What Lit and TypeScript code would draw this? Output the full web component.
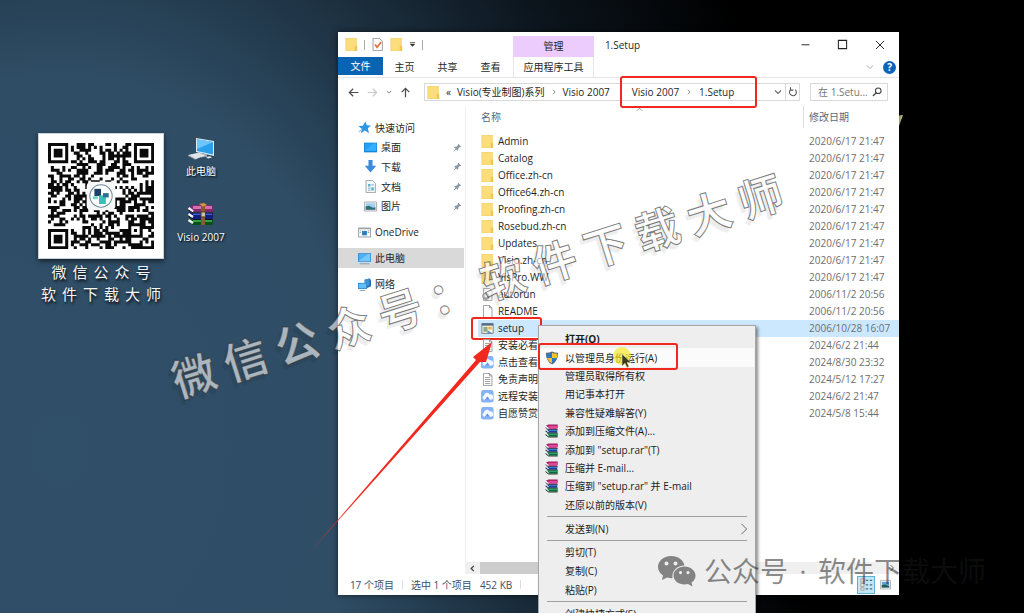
import { LitElement, html, css, svg, nothing, TemplateResult } from "lit";
import { customElement, property } from "lit/decorators.js";
import { classMap } from "lit/directives/class-map.js";

const QR_SIZE = 37;

/** Builds the path of a QR-like symbol: finders, timing rows, one alignment mark and a data field. */
function qrPath(): string {
  let seed = 20070617;
  const rand = () => {
    seed = (seed * 1103515245 + 12345) & 0x7fffffff;
    return (seed >> 8) / 0x7fffff;
  };
  const finders = [[0, 0], [QR_SIZE - 7, 0], [0, QR_SIZE - 7]];
  let d = "";
  for (let y = 0; y < QR_SIZE; y++) {
    for (let x = 0; x < QR_SIZE; x++) {
      let on = rand() > 0.46;
      for (const [fx, fy] of finders) {
        const ring = Math.max(Math.abs(x - fx - 3), Math.abs(y - fy - 3));
        if (ring <= 4) on = ring === 3 || ring <= 1;
      }
      const mark = Math.max(Math.abs(x - 30), Math.abs(y - 30));
      if (mark <= 2) on = mark !== 1;
      if (on) d += `M${x} ${y}h1.06v1.06h-1.06z`;
    }
  }
  return d;
}

const rarBooks = svg`
  <path d="M1 2l3-1.500h10.500v4l-2 .8H4z" fill="#a3195b"/><path d="M4 2h10l.5 3H4z" fill="#e0499b"/>
  <path d="M1 6l3 .4h10v3.600H4L1 9z" fill="#1b3f9c"/><path d="M4.500 6.500H14v1.300H4.500z" fill="#3f8be0"/>
  <path d="M1 10.500h13.500v4H4l-3-1.500z" fill="#0c6b3c"/><path d="M4.500 11H14v1.300H4.500z" fill="#31b56c"/>
  <path d="M.8 2.500L4 5.200M.8 6.300L4 9M.8 10.300L4 13.500" stroke="#fff" stroke-width="1.300"/>
  <path d="M.5 4L4 6.500M.5 8L4 10.300M.5 12L4 15h10.500M4 6.200h10.500M4 10.300h10.500" stroke="#222" stroke-width=".8" fill="none"/>`;

const docLines = svg`<path d="M3 .5h7.500L13.500 3.500v12H3z" fill="#fff" stroke="#8a8a8a"/><path d="M10.500.5v3h3" fill="none" stroke="#8a8a8a"/>`;

const glyphs: Record<string, TemplateResult> = {
  folder: svg`<path d="M1 0h13v16H1z" fill="#fbdd7c"/><path d="M1 0h13v16H1z" fill="none" stroke="#efcb63" stroke-width=".8"/><path d="M12 9.500h3V16h-3z" fill="#f0c552"/>` as any,
  check: svg`<path d="M2.500.5h8L14 4v11.500H2.500z" fill="#fdfdfd" stroke="#8b8b8b"/><path d="M5 8l2.500 3.500L12.500 5" fill="none" stroke="#e2703a" stroke-width="2"/>` as any,
  autorun: svg`<path d="M3 .5h7.500L13.500 3.500v12H3z" fill="#fff" stroke="#999"/><circle cx="6" cy="10" r="4" fill="#b9bfc6" stroke="#888"/><circle cx="6" cy="10" r="1.300" fill="#fff"/>` as any,
  blank: docLines as any,
  text: svg`${docLines}<path d="M5 5.500h6M5 8h6.500M5 10.500h6.500M5 13h6.500" stroke="#8d8d8d"/>` as any,
  setup: svg`<path d="M1 2h14v12H1z" fill="#f4f1dc" stroke="#6d6d6d"/><path d="M1 1.500h14v3H1z" fill="#56708c"/><path d="M3 6h5v6H3z" fill="#8fa88a"/><path d="M9 6h4v3H9z" fill="#e8b23c"/><path d="M8 10l6 4H8z" fill="#5f8cc2"/>` as any,
  cloud: svg`<rect x="0" y="0" width="15.500" height="15.500" rx="3" fill="#86b2f6"/><path d="M4 12a2.600 2.600 0 0 1-.5-5 4 4 0 0 1 7.500-1.500 3.300 3.300 0 0 1 1.500 6.500z" fill="#f4f9ff"/><path d="M4.500 12l3.500-4 3 4z" fill="#5f95ee"/>` as any,
  star: svg`<path d="M9 .5l2 4.700 5 .3-3.900 3.300L13.500 15 8.500 11.700 3.500 15l1.300-5.300L.5 6.300l5.500-.6z" fill="#2f96e3"/><path d="M1 13.500l4-3" stroke="#8cc5f2" stroke-width="1.500"/>` as any,
  desktop: svg`<path d="M0 2h16v12H0z" fill="#1b86d8"/><path d="M1 3h14v9H1z" fill="#23a2f5"/><path d="M1 12L12 3h3v9z" fill="#35b0ff"/>` as any,
  download: svg`<path d="M5.500 0h5v7H15l-7 8.500L1 7h4.500z" fill="#3a8bdc"/>` as any,
  document: svg`<path d="M2.500.5h8L14 4v11.500H2.500z" fill="#f4f9fc" stroke="#8a949c"/><path d="M5 5h3v3H5zM9 9h3v4H9z" fill="#5fb0cf"/><path d="M9 6h3M5 10h3M5 12.500h3" stroke="#5a9ab5"/>` as any,
  picture: svg`<path d="M.5 2.500h15v11H.5z" fill="#fafafa" stroke="#9a9a9a"/><path d="M2 4h12v8H2z" fill="#9fd0ee"/><path d="M2 8l4-1 5 2.500 3-.5v3H2z" fill="#2c6f77"/>` as any,
  onedrive: svg`<path d="M.5 2.500h15v11H.5z" fill="#fdfdfd" stroke="#808890"/><path d="M1 2.500h14V4H1z" fill="#9aa3ab"/><path d="M5 6h6v5.500H5z" fill="#2b7fc4"/><path d="M12 6h2M12 8h2M2 6h1.500M2 8h1.500" stroke="#888"/>` as any,
  pc: svg`<path d="M0 1.500h16v10.500H0z" fill="#2a8ad6"/><path d="M1 2.500h14v8.500H1z" fill="#4db1f4"/><path d="M1 11L12 2.500h3V11z" fill="#76c8fb"/><path d="M2 14.500h12" stroke="#7f9fb8" stroke-width="1.200"/>` as any,
  network: svg`<path d="M8 2l6-1.500 2 2V10l-6 3z" fill="#2472ad"/><path d="M8 2l6-1.500V9l-6 2z" fill="#3f93d3"/><path d="M0 6h11v7.500H0z" fill="#2a8ad6"/><path d="M1 7h9v5.500H1z" fill="#63bdf8"/><path d="M2 15.300h7" stroke="#6f8ea5"/>` as any,
  pin: svg`<path d="M9.500 1.500l5 5-1.500 1-1-.3-2.800 2.800.2 2.500-1.400 1.400L2.100 8l1.400-1.400L6 6.800 8.800 4l-.3-1z" fill="#8b97a3"/><path d="M5.500 10.500L1.500 14.500" stroke="#8b97a3" stroke-width="1.500"/>` as any,
  shield: svg`<path d="M8 .5q4 2 7 1.500 0 9.500-7 13.500Q1 11.500 1 2q3 .5 7-1.500z" fill="#5b6a78"/><path d="M8 2v6H2.200Q2 5 2 3.200 5 3.500 8 2z" fill="#2a78c8"/><path d="M8 2q3 1.500 6 1.200Q14 5 13.800 8H8z" fill="#f5c02e"/><path d="M2.200 8H8v6.300Q3.500 11.500 2.200 8z" fill="#f5c02e"/><path d="M13.800 8H8v6.300Q12.500 11.500 13.800 8z" fill="#2a78c8"/>` as any,
  rar: rarBooks as any,
  left: svg`<path d="M15 8H2M7.500 2.500L2 8l5.500 5.500" fill="none" stroke="#4d4d4d" stroke-width="1.800"/>` as any,
  right: svg`<path d="M1 8h13M8.500 2.500L14 8l-5.500 5.500" fill="none" stroke="#c9c9c9" stroke-width="1.800"/>` as any,
  up: svg`<path d="M8 15V2M2.500 7.500L8 2l5.500 5.500" fill="none" stroke="#4d4d4d" stroke-width="1.800"/>` as any,
  chevronDown: svg`<path d="M2 5l6 6 6-6" fill="none" stroke="#6a6a6a" stroke-width="2.200"/>` as any,
  chevronPale: svg`<path d="M2 5l6 6 6-6" fill="none" stroke="#a8a8a8" stroke-width="2"/>` as any,
  chevronUp: svg`<path d="M2 11l6-6 6 6" fill="none" stroke="#8a8a8a" stroke-width="2"/>` as any,
  chevronRight: svg`<path d="M5 2l6 6-6 6" fill="none" stroke="#5f5f5f" stroke-width="2"/>` as any,
  chevronLeft: svg`<path d="M11 2L5 8l6 6" fill="none" stroke="#444" stroke-width="3"/>` as any,
  thinRight: svg`<path d="M4.500 1l7 7-7 7" fill="none" stroke="#666" stroke-width="1.300"/>` as any,
  customize: svg`<path d="M2 4h12" stroke="#333" stroke-width="2"/><path d="M2 7h12l-6 6z" fill="#333"/>` as any,
  minimize: svg`<path d="M1 8.500h14" stroke="#222" stroke-width="1.700"/>` as any,
  maximize: svg`<path d="M2 2h12v12H2z" fill="none" stroke="#222" stroke-width="1.500"/>` as any,
  close: svg`<path d="M1.500 1.500l13 13M14.500 1.500l-13 13" stroke="#222" stroke-width="1.500"/>` as any,
  refresh: svg`<path d="M4 4.500a5.500 5.500 0 1 0 7.500-.3M4 .5v4.500h4.500" fill="none" stroke="#555" stroke-width="1.700"/>` as any,
  search: svg`<circle cx="10" cy="6" r="4.500" fill="none" stroke="#444" stroke-width="1.700"/><path d="M6.800 9.200L1.500 14.500" stroke="#444" stroke-width="2"/>` as any,
  details: svg`<path d="M1 1h4v4H1zM1 6.500h4v4H1zM1 12h4v3H1z" fill="#e8e2de" stroke="#a08a80" stroke-width=".8"/><path d="M7 3h3M12 3h3M7 8.500h3M12 8.500h3M7 13.500h3M12 13.500h3" stroke="#56707e" stroke-width="1.500"/>` as any,
  thumbs: svg`<path d="M.7 2h14.600v12.500H.7z" fill="#fff" stroke="#9a9a9a"/><path d="M2.500 4h11v8.500h-11z" fill="#5aa7e0"/><path d="M2.500 9l5-1 6 3v1.500h-11z" fill="#245a4a"/>` as any,
};

@customElement("ui-icon")
export class UiIcon extends LitElement {
  @property() name = "";
  @property({ type: Number }) size = 12;

  static styles = css`
    :host { display: inline-flex; flex: none; }
    .glyph { display: block; }
  `;

  render() {
    return html`<svg class="glyph" width=${this.size} height=${this.size} viewBox="0 0 16 16" aria-hidden="true">${glyphs[this.name]}</svg>`;
  }
}

interface MenuEntry { label: string; icon?: string; bold?: boolean; hot?: boolean; sub?: boolean }

const menuGroups: { kind: string; items: MenuEntry[] }[] = [
  {
    kind: "tall",
    items: [
      { label: "打开(O)", bold: true },
      { label: "以管理员身份运行(A)", icon: "shield", hot: true },
      { label: "管理员取得所有权" },
      { label: "用记事本打开" },
      { label: "兼容性疑难解答(Y)" },
      { label: "添加到压缩文件(A)...", icon: "rar" },
      { label: '添加到 "setup.rar"(T)', icon: "rar" },
      { label: "压缩并 E-mail...", icon: "rar" },
      { label: '压缩到 "setup.rar" 并 E-mail', icon: "rar" },
      { label: "还原以前的版本(V)" },
    ],
  },
  { kind: "single", items: [{ label: "发送到(N)", sub: true }] },
  { kind: "triple", items: [{ label: "剪切(T)" }, { label: "复制(C)" }, { label: "粘贴(P)" }] },
  { kind: "single", items: [{ label: "创建快捷方式(S)" }] },
];

@customElement("context-menu")
export class ContextMenu extends LitElement {
  static styles = css`
    :host {
      display: block; box-sizing: border-box; width: 218px; padding: 4px 0 12px;
      background: #eee; border: 1px solid #a6a6a6; box-shadow: 2px 2px 3px rgba(0, 0, 0, .45);
    }
    .group { display: flex; flex-direction: column; margin: 0; padding: 0 1px; list-style: none; }
    .tall { height: 184px; }
    .triple { height: 56px; }
    .single { height: 19px; }
    .row { position: relative; flex: 1; display: flex; }
    .item {
      flex: 1; display: grid; grid-template-columns: 25px 1fr 16px; align-items: center;
      padding: 0; border: 0; background: none; font: inherit; line-height: 16px; color: #1b1b1b; text-align: left;
    }
    .slot { display: flex; justify-content: center; }
    .bold { font-weight: 700; }
    .hot { background: #fbfbfb; }
    .rule { height: 1px; margin: 2px 8px; border: 0; background: #a0a0a0; }
    .ring {
      position: absolute; left: -2px; top: -5px; width: 136px; height: 23px;
      border: 2px solid #f0281e; border-radius: 3px; pointer-events: none;
    }
    .pointer { position: absolute; left: 72px; top: -2px; pointer-events: none; }
  `;

  private row(e: MenuEntry) {
    return html`<li class="row">
      <button class=${classMap({ item: true, bold: !!e.bold, hot: !!e.hot })} role="menuitem">
        <span class="slot">${e.icon ? html`<ui-icon name=${e.icon} .size=${14}></ui-icon>` : nothing}</span>
        <span>${e.label}</span>
        ${e.sub ? html`<ui-icon name="thinRight" .size=${12}></ui-icon>` : nothing}
      </button>
      ${e.hot
        ? html`<span class="ring"></span>
            <svg class="pointer" width="24" height="26" viewBox="0 0 24 26" aria-hidden="true">
              <circle cx="10" cy="10" r="9" fill="#f6e71d" fill-opacity=".66" />
              <path d="M10 8v12l3-2.700 2 4.200 2-1-2-4h4z" fill="#3a3a20" stroke="#e8e8a0" stroke-width=".5" />
            </svg>`
        : nothing}
    </li>`;
  }

  render() {
    return menuGroups.map(
      (g, i) => html`${i ? html`<hr class="rule" />` : nothing}
        <ul class="group ${g.kind}">${g.items.map((e) => this.row(e))}</ul>`
    );
  }
}

const files: [string, string, string][] = [
  ["folder", "Admin", "2020/6/17 21:47"],
  ["folder", "Catalog", "2020/6/17 21:47"],
  ["folder", "Office.zh-cn", "2020/6/17 21:47"],
  ["folder", "Office64.zh-cn", "2020/6/17 21:47"],
  ["folder", "Proofing.zh-cn", "2020/6/17 21:47"],
  ["folder", "Rosebud.zh-cn", "2020/6/17 21:47"],
  ["folder", "Updates", "2020/6/17 21:47"],
  ["folder", "Visio.zh-cn", "2020/6/17 21:47"],
  ["folder", "VisPro.WW", "2020/6/17 21:47"],
  ["autorun", "autorun", "2006/11/2 20:56"],
  ["blank", "README", "2006/11/2 20:56"],
  ["setup", "setup", "2006/10/28 16:07"],
  ["text", "安装必看", "2024/6/2 21:44"],
  ["cloud", "点击查看", "2024/8/30 23:32"],
  ["text", "免责声明", "2024/5/12 17:27"],
  ["cloud", "远程安装", "2024/6/2 21:47"],
  ["cloud", "自愿赞赏", "2024/5/8 15:44"],
];

const quickLinks = [["desktop", "桌面"], ["download", "下载"], ["document", "文档"], ["picture", "图片"]];

@customElement("explorer-window")
export class ExplorerWindow extends LitElement {
  static styles = css`
    :host {
      display: flex; flex-direction: column; background: #fff; color: #1f1f1f;
      box-shadow: 0 0 6px rgba(0, 0, 0, .6);
    }
    button, input { font: inherit; color: inherit; margin: 0; padding: 0; border: 0; background: none; }
    a { color: inherit; text-decoration: none; }
    .tool { display: flex; align-items: center; justify-content: center; }

    .head { display: grid; grid-template-columns: 175px 81px 1fr; grid-template-rows: 25px 20px; border-bottom: 1px solid #e4e4e4; }
    .quick { display: flex; align-items: center; gap: 6px; padding-left: 7px; }
    .bar { width: 1px; height: 10px; background: #aaa; }
    .manage { margin-top: 4px; background: #ebccfc; line-height: 21px; text-align: center; }
    .caption { display: flex; align-items: center; padding-left: 11px; }
    .controls { display: flex; margin-left: auto; padding-right: 1px; }
    .controls .tool { width: 37px; height: 25px; }
    .tabs { display: flex; }
    .tab { width: 43px; height: 20px; line-height: 20px; text-align: center; }
    .file { width: 45px; height: 18px; line-height: 18px; background: #0a64b4; color: #fff; }
    .apptab { width: auto; border: 1px solid #e6e6e6; border-width: 0 1px; }
    .expand { display: flex; align-items: center; justify-content: flex-end; gap: 9px; padding-right: 3px; }
    .help { width: 13px; height: 13px; border-radius: 50%; background: #0c64b8; color: #fff; font-size: 10px; font-weight: 700; line-height: 13px; }

    .address { display: flex; align-items: center; padding: 4px 11px 4px 10px; height: 20px; gap: 10px; }
    .steps { display: flex; gap: 8px; align-items: center; width: 70px; }
    .path { flex: 1; display: flex; align-items: center; height: 18px; margin-left: -4px; border: 1px solid #d9d9d9; box-sizing: border-box; }
    .crumbs { position: relative; display: flex; align-items: center; gap: 6px; padding-left: 2px; white-space: nowrap; }
    .marked { padding-left: 22px; gap: 7px; }
    .marked::after { content: ""; position: absolute; left: 10px; right: -23px; top: -9px; bottom: -9px; border: 2px solid #f0281e; border-radius: 3px; }
    .ends { margin-left: auto; display: flex; }
    .ends .tool { width: 14px; height: 16px; }
    .reload { border-left: 1px solid #d9d9d9; }
    .search { display: flex; align-items: center; width: 78px; height: 18px; box-sizing: border-box; border: 1px solid #d9d9d9; padding: 0 5px 0 7px; }
    .search input { flex: 1; min-width: 0; width: 0; outline: 0; color: #777; }
    .search input::placeholder { color: #777; opacity: 1; }

    .body { flex: 1; display: grid; grid-template-columns: 128px 1fr; min-height: 0; }
    .nav { display: flex; flex-direction: column; gap: 6px; padding-top: 12px; padding-right: 1px; border-right: 1px solid #f0f0f0; }
    .favs { display: grid; grid-template-rows: repeat(5, 1fr); height: 98px; }
    .place { display: flex; align-items: center; gap: 4px; padding: 0 2px 0 20px; height: 20px; }
    .favs .place { height: auto; }
    .child { padding-left: 26px; }
    .root { padding-left: 20px; }
    .child .pin { margin-left: auto; }
    .here { background: #d9d9d9; }

    .pane { display: flex; flex-direction: column; justify-content: space-between; min-width: 0; }
    .list { margin-left: 12px; }
    .files { width: 100%; border-collapse: collapse; table-layout: fixed; }
    .files th { height: 21px; padding: 0 0 6px 3px; font-weight: 400; text-align: left; color: #58697c; }
    .files .when { width: 90px; padding-left: 5px; }
    .files th.when { position: relative; }
    .files th.when::before { content: ""; position: absolute; left: -1px; top: 0; height: 22px; width: 1px; background: #dedede; }
    .files td { height: 17px; padding: 0 0 0 3px; line-height: 17px; white-space: nowrap; }
    .files td.when { color: #6e6e6e; }
    .entry { position: relative; display: flex; align-items: center; gap: 4px; height: 17px; }
    .sel { background: #cce8ff; }
    .sorted { position: relative; }
    .sort { position: absolute; left: 158px; top: 0; line-height: 0; }
    .ring { position: absolute; left: -10px; top: -3px; width: 67px; height: 19px; border: 2px solid #f0281e; border-radius: 3px; }

    .scroll { display: flex; height: 12px; background: #f0f0f0; }
    .scroll .tool { width: 14px; }
    .thumb { width: 200px; background: #cdcdcd; }
    .gap { flex: 1; }
    .status { display: flex; align-items: center; height: 21px; padding: 0 6px 0 12px; color: #3c5068; gap: 8px; }
    .status .sep { width: 1px; height: 9px; background: #ddd; }
    .views { margin-left: auto; display: flex; align-items: center; gap: 3px; }
    .views .tool { width: 15px; height: 18px; }
    .views .on { width: 18px; border: 1px solid #5fb2d6; background: #c3e6f6; }

    .menu { position: absolute; left: 200px; top: 293px; }
    .arrow { position: absolute; left: -38px; top: 308px; pointer-events: none; }
  `;

  render() {
    return html`
      <header class="head">
        <div class="quick">
          <ui-icon name="folder" .size=${13}></ui-icon><span class="bar"></span>
          <ui-icon name="check" .size=${13}></ui-icon><ui-icon name="folder" .size=${13}></ui-icon>
          <button class="tool" aria-label="自定义"><ui-icon name="customize" .size=${7}></ui-icon></button><span class="bar"></span>
        </div>
        <div class="manage">管理</div>
        <div class="caption">1.Setup
          <div class="controls">
            <button class="tool" aria-label="最小化"><ui-icon name="minimize" .size=${9}></ui-icon></button>
            <button class="tool" aria-label="最大化"><ui-icon name="maximize" .size=${11}></ui-icon></button>
            <button class="tool" aria-label="关闭"><ui-icon name="close" .size=${10}></ui-icon></button>
          </div>
        </div>
        <nav class="tabs">
          <button class="tab file">文件</button><button class="tab">主页</button><button class="tab">共享</button><button class="tab">查看</button>
        </nav>
        <button class="tab apptab">应用程序工具</button>
        <div class="expand">
          <button class="tool" aria-label="展开"><ui-icon name="chevronPale" .size=${8}></ui-icon></button>
          <button class="help" aria-label="帮助">?</button>
        </div>
      </header>

      <div class="address">
        <div class="steps">
          <button class="tool" aria-label="后退"><ui-icon name="left" .size=${11}></ui-icon></button>
          <button class="tool" aria-label="前进"><ui-icon name="right" .size=${11}></ui-icon></button>
          <button class="tool" aria-label="历史"><ui-icon name="chevronDown" .size=${6}></ui-icon></button>
          <button class="tool" aria-label="上移"><ui-icon name="up" .size=${11}></ui-icon></button>
        </div>
        <div class="path">
          <div class="crumbs">
            <ui-icon name="folder" .size=${13}></ui-icon><span>«</span>
            <button>Visio(专业制图)系列</button><ui-icon name="chevronRight" .size=${6}></ui-icon>
            <button>Visio 2007</button>
          </div>
          <div class="crumbs marked">
            <button>Visio 2007</button><ui-icon name="chevronRight" .size=${6}></ui-icon><button>1.Setup</button>
          </div>
          <div class="ends">
            <button class="tool" aria-label="以前的位置"><ui-icon name="chevronDown" .size=${8}></ui-icon></button>
            <button class="tool reload" aria-label="刷新"><ui-icon name="refresh" .size=${10}></ui-icon></button>
          </div>
        </div>
        <label class="search"><input type="text" aria-label="搜索" placeholder="在 1.Setu..." /><ui-icon name="search" .size=${10}></ui-icon></label>
      </div>

      <div class="body">
        <nav class="nav">
          <div class="favs">
            <a class="place" href="#quick"><ui-icon name="star" .size=${13}></ui-icon>快速访问</a>
            ${quickLinks.map(([icon, label]) => html`
              <a class="place child" href="#${icon}"><ui-icon name=${icon} .size=${13}></ui-icon>${label}<ui-icon class="pin" name="pin" .size=${9}></ui-icon></a>`)}
          </div>
          <a class="place root" href="#onedrive"><ui-icon name="onedrive" .size=${13}></ui-icon>OneDrive</a>
          <a class="place root here" href="#pc"><ui-icon name="pc" .size=${13}></ui-icon>此电脑</a>
          <a class="place root" href="#network"><ui-icon name="network" .size=${13}></ui-icon>网络</a>
        </nav>
        <div class="pane">
          <div class="list">
            <table class="files">
              <thead><tr>
                <th class="sorted">名称<span class="sort"><ui-icon name="chevronUp" .size=${7}></ui-icon></span></th>
                <th class="when">修改日期</th>
              </tr></thead>
              <tbody>
                ${files.map(([icon, name, date]) => html`
                  <tr class=${classMap({ sel: name === "setup" })}>
                    <td><div class="entry"><ui-icon name=${icon} .size=${13}></ui-icon>${name}${name === "setup" ? html`<span class="ring"></span>` : nothing}</div></td>
                    <td class="when">${date}</td>
                  </tr>`)}
              </tbody>
            </table>
          </div>
          <div class="scroll">
            <button class="tool" aria-label="向左滚动"><ui-icon name="chevronLeft" .size=${7}></ui-icon></button>
            <div class="thumb"></div><div class="gap"></div>
            <button class="tool" aria-label="向右滚动"><ui-icon name="chevronRight" .size=${8}></ui-icon></button>
          </div>
        </div>
      </div>

      <footer class="status">
        <span>17 个项目</span><span class="sep"></span><span>选中 1 个项目</span><span>452 KB</span><span class="sep"></span>
        <div class="views">
          <button class="tool on" aria-label="详细信息"><ui-icon name="details" .size=${13}></ui-icon></button>
          <button class="tool" aria-label="大图标"><ui-icon name="thumbs" .size=${11}></ui-icon></button>
        </div>
      </footer>

      <context-menu class="menu" role="menu"></context-menu>
      <svg class="arrow" width="200" height="224" viewBox="0 0 200 224" aria-hidden="true">
        <defs>
          <linearGradient id="fade" x1="0" y1="1" x2="1" y2="0">
            <stop offset="0" stop-color="#f0281e" stop-opacity=".2" /><stop offset=".25" stop-color="#f0281e" />
          </linearGradient>
        </defs>
        <path d="M3 220L176 20l-3-3 19-15-6 20-6 0z" fill="url(#fade)" />
      </svg>
    `;
  }
}

@customElement("app-root")
export class AppRoot extends LitElement {
  static styles = css`
    :host {
      position: relative; display: block; height: 100vh; min-height: 560px; overflow: hidden;
      background: radial-gradient(ellipse 760px 940px at 60px 450px, #304f68 0, #2f4d65 40%, #253e52 50%, #0c151d 78%, #000 100%) #000;
      font: 10px/14px "Open Sans", "Noto Sans", "Noto Sans CJK SC", sans-serif;
    }
    .contact { position: absolute; left: 38px; top: 133px; width: 126px; }
    .qr { display: block; box-sizing: border-box; width: 126px; height: 126px; padding: 9px; background: #fff; border: 1px solid #c7d2da; box-shadow: 0 2px 5px rgba(0, 0, 0, .6); }
    .words { display: flex; flex-direction: column; align-items: center; gap: 2px; margin-top: 3px; color: #f4f6f8; font-size: 15px; line-height: 20px; text-shadow: 1px 2px 3px #000; }
    .spaced { display: flex; gap: 6px; }
    .shortcuts { position: absolute; left: 170px; top: 136px; width: 62px; display: flex; flex-direction: column; gap: 24px; }
    .shortcut { display: flex; flex-direction: column; align-items: center; gap: 2px; color: #fff; text-decoration: none; text-shadow: 1px 1px 2px #000; white-space: nowrap; }
    .sliver { position: absolute; left: 87.500%; top: 114px; }
    .win { position: absolute; left: 33%; right: 12.200%; top: 32px; bottom: 18px; }
    .stamp {
      position: absolute; left: 153px; top: 262px; display: grid; grid-template-columns: repeat(12, 54px);
      transform: rotate(-17.500deg); justify-items: center; pointer-events: none;
      font-size: 44px; line-height: 48px; font-weight: 700;
      color: rgba(255, 255, 255, .6); -webkit-text-stroke: 1px rgba(40, 40, 40, .6);
      text-shadow: -4px 4px 1px rgba(0, 0, 0, .07);
    }
    .credit { position: absolute; left: 657px; top: 551px; display: flex; align-items: center; color: rgba(24, 24, 24, .5); font-size: 28px; line-height: 40px; white-space: nowrap; pointer-events: none; }
    .credit .who { padding-left: 8px; }
    .credit .dot { width: 30px; text-align: center; }
  `;

  private pc() {
    return svg`<path d="M9 1l18 3v15L9 15z" fill="#d9ecf8"/><path d="M10 2.300l16 2.600v12.600L10 14z" fill="#2b9fea"/><path d="M10 2.300l16 2.600L10 12z" fill="#6cc6fb"/>
      <path d="M14 16l6 1.500v2l-6 1z" fill="#aab4bb"/><path d="M1 18l11-2.500 6 3L8 22.500z" fill="#dde3e7"/><path d="M1 18l7 3.500v1L1 19z" fill="#8f9ba4"/><path d="M19 20l4-.8 2 1.200-4 1.200z" fill="#e6eaed"/>`;
  }

  private chars(text: string) {
    return [...text].map((c) => html`<span>${c}</span>`);
  }

  render() {
    return html`
      <section class="contact">
        <svg class="qr" viewBox="0 0 37 37" role="img" aria-label="二维码">
          <path d=${qrPath()} fill="#0a0a0a" />
          <rect x="13.500" y="13.500" width="10" height="10" rx="1.500" fill="#f6f8f8" />
          <circle cx="18.500" cy="18.500" r="3.900" fill="#fff" stroke="#6f8b97" stroke-width=".35" />
          <path d="M16.200 16h2.300v2.500h-2.300z" fill="#1c3f6b" /><path d="M17.800 18.300h2.400v3h-2.400z" fill="#38c0b8" />
          <path d="M19.200 17.500h2v1.500h-2z" fill="#2a6f8e" /><path d="M15.700 18.600h1.700v1h-1.700z" fill="#74d5cf" />
        </svg>
        <div class="words">
          <div class="spaced">${this.chars("微信公众号")}</div>
          <div class="spaced">${this.chars("软件下载大师")}</div>
        </div>
      </section>

      <nav class="shortcuts">
        <a class="shortcut" href="#computer">
          <svg width="28" height="26" viewBox="0 0 28 24" aria-hidden="true">${this.pc()}</svg>此电脑
        </a>
        <a class="shortcut" href="#visio">
          <svg width="28" height="26" viewBox="0 0 28 26" aria-hidden="true">
            <path d="M3 5l3-2h19l1 2v4l-1 1H6L2 8z" fill="#7c2a6c" /><path d="M6 4h19v3H6z" fill="#d46fb6" />
            <path d="M2 10l4 1h20v5l-1 1H6l-4-2z" fill="#10207c" /><path d="M6 11h19v2H6z" fill="#3560e0" />
            <path d="M2 16l4 2h20v4l-1 1H6l-4-3z" fill="#0a4f18" /><path d="M6 18h19v2H6z" fill="#2fa043" />
            <path d="M1.500 6L6 9.500M1.500 12L6 15M1.500 18L6 21" stroke="#f2f2f2" stroke-width="2.500" />
            <path d="M1.500 8L6 11h20M1.500 14L6 17.500h20" stroke="#1c1420" fill="none" />
            <path d="M14 3h4v20h-4z" fill="#8a5a2c" /><path d="M14 10h4.500v5H14z" fill="#c9c2b0" stroke="#4b3a20" />
            <path d="M12 2l5-1 3 2-4 1.500z" fill="#d8963a" />
          </svg>Visio 2007
        </a>
      </nav>

      <svg class="sliver" width="8" height="16" viewBox="0 0 8 16" aria-hidden="true"><path d="M0 2l7-1-5 14H0z" fill="#d5cf86" /></svg>
      <explorer-window class="win"></explorer-window>

      <div class="stamp">${this.chars("微信公众号：软件下载大师")}</div>

      <div class="credit">
        <svg width="39" height="34" viewBox="0 0 39 34" aria-hidden="true">
          <path fill="currentColor" fill-rule="evenodd" d="M14 2C6.500 2 1 7 1 13c0 3.500 2 6.500 5 8.500L5 26l5-2.500 4 .8 1.500-.1C14.500 17 20 11.500 27.500 11.500 26.500 6 21 2 14 2zM9.500 7.500a2 2 0 1 1 0 4 2 2 0 0 1 0-4zm9 0a2 2 0 1 1 0 4 2 2 0 0 1 0-4z" />
          <path fill="currentColor" fill-rule="evenodd" d="M27.500 12.500c-6 0-11 4-11 9s5 9 11 9l3.500-.5 4.500 2.500-1-4c2.500-1.500 4-4 4-7 0-5-5-9-11-9zM23.500 17a1.600 1.600 0 1 1 0 3.200 1.600 1.600 0 0 1 0-3.200zm7.500 0a1.600 1.600 0 1 1 0 3.200 1.600 1.600 0 0 1 0-3.200z" />
        </svg>
        <span class="who">公众号</span><span class="dot">·</span><span>软件下载大师</span>
      </div>
    `;
  }
}
